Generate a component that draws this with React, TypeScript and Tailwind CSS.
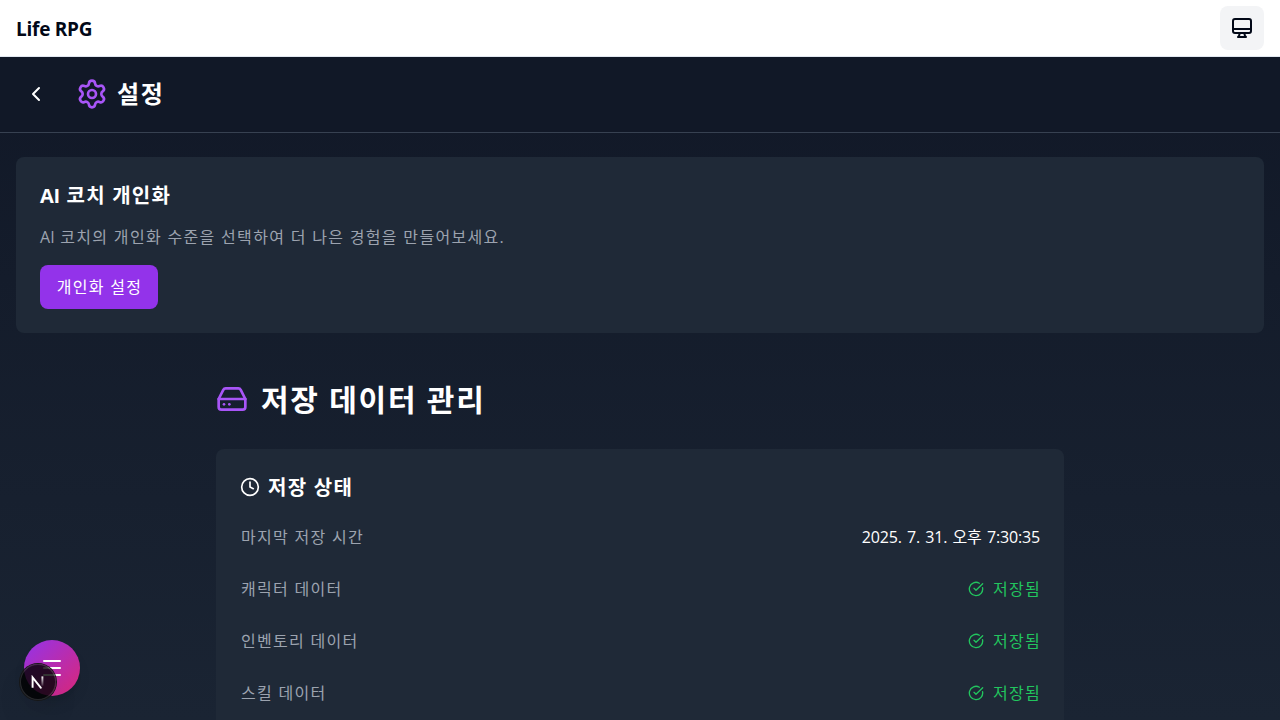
import { Settings, ChevronLeft, HardDrive, Clock, CircleCheckBig, Menu } from 'lucide-react';

const rows = ['캐릭터 데이터', '인벤토리 데이터', '스킬 데이터'];

function DesktopIcon() {
  return (
    <svg width="24" height="24" viewBox="0 0 24 24" fill="none" stroke="currentColor" strokeWidth="2" strokeLinecap="round" strokeLinejoin="round">
      <path d="M9.75 17L9 20l-1 1h8l-1-1-.75-3M3 13h18M5 17h14a2 2 0 002-2V5a2 2 0 00-2-2H5a2 2 0 00-2 2v10a2 2 0 002 2z" />
    </svg>
  );
}

export default function App() {
  return (
    <div className="relative flex h-[720px] flex-col overflow-hidden bg-[#111827] font-['Open_Sans','Noto_Sans_CJK_KR',sans-serif] text-white">
      <header className="flex h-[57px] shrink-0 items-center justify-between border-b border-[#e2e8f0] bg-white px-4 text-[#020817]">
        <span className="pt-0.5 text-[19px] leading-7 font-bold tracking-[-0.25px]">Life RPG</span>
        <button className="flex size-11 items-center justify-center rounded-lg bg-[#f3f4f6]"><DesktopIcon /></button>
      </header>
      <div className="flex h-[663px] shrink-0 flex-col bg-linear-to-b/srgb from-[#111827] to-[#1a2433]">
        <div className="flex h-[76px] shrink-0 items-center border-b border-[#374151] bg-[#111827] px-4 pb-0.5">
          <div className="flex size-10 items-center justify-center"><ChevronLeft size={24} /></div>
          <Settings size={32} className="ml-5 text-[#a855f7]" />
          <h1 className="ml-[9px] pt-px text-2xl font-bold tracking-[1.7px]">설정</h1>
        </div>
        <section className="mx-4 mt-6 h-44 shrink-0 rounded-lg bg-[#1f2937] p-6">
          <h2 className="pt-px text-xl leading-7 font-bold tracking-[1.25px]"><span className="tracking-[-0.2px]">AI</span> 코치 개인화</h2>
          <p className="mt-[15px] tracking-[1.32px] text-[#9ca3af]"><span className="tracking-[0.1px]">AI</span> 코치의 개인화 수준을 선택하여 더 나은 경험을 만들어보세요.</p>
          <button className="mt-4 h-11 w-[118px] rounded-lg bg-[#9333ea] pl-px tracking-[1.32px]">개인화 설정</button>
        </section>
        <main className="mx-auto mt-12 w-[848px] shrink-0">
          <div className="flex h-9 items-center gap-3">
            <HardDrive size={32} className="text-[#a855f7]" />
            <h2 className="pt-0.5 pl-px text-3xl font-bold tracking-[1.75px]">저장 데이터 관리</h2>
          </div>
          <div className="mt-8 h-72 rounded-lg bg-[#1f2937] p-6">
            <h3 className="mb-4 flex h-7 items-center gap-2 text-xl font-bold tracking-[1.25px]"><Clock size={20} /><span className="pt-px">저장 상태</span></h3>
            <div className="flex h-10 items-center justify-between">
              <span className="pl-px tracking-[1.3px] text-[#9ca3af]">마지막 저장 시간</span>
              <span className="tracking-[-0.15px] [word-spacing:1.2px]">2025. 7. 31. 오후 7:30:35</span>
            </div>
            {rows.map((r) => (
              <div key={r} className="mt-3 flex h-10 items-center justify-between tracking-[1.3px] text-[#9ca3af]">
                <span className="pl-px">{r}</span>
                <span className="flex items-center gap-2 text-[#22c55e]"><CircleCheckBig size={16} /><span className="-mr-px pl-px">저장됨</span></span>
              </div>
            ))}
          </div>
        </main>
      </div>
      <button className="absolute bottom-6 left-6 flex size-14 items-center justify-center rounded-full bg-linear-to-br/srgb from-[#9333ea] to-[#db2777] shadow-lg"><Menu size={24} /></button>
      <div className="absolute bottom-5 left-5 flex size-9 items-center justify-center rounded-full bg-black/80 shadow-[0_0_0_1px_#171717,inset_0_0_0_1px_rgba(255,255,255,0.14),0_16px_32px_-8px_rgba(0,0,0,0.24)]">
        <svg width="14" height="14" viewBox="0 0 14 14" fill="none" strokeWidth="1.9">
          <defs>
            <linearGradient id="diag" x1="7" y1="6" x2="12" y2="13" gradientUnits="userSpaceOnUse"><stop stopColor="white" /><stop offset="0.8" stopColor="white" /><stop offset="1" stopColor="white" stopOpacity="0.4" /></linearGradient>
            <linearGradient id="stem" x1="11" y1="1" x2="11" y2="11" gradientUnits="userSpaceOnUse"><stop stopColor="white" /><stop offset="1" stopColor="white" stopOpacity="0.1" /></linearGradient>
          </defs>
          <path d="M1.6 12.7V2.4L10.5 13.6" stroke="url(#diag)" />
          <path d="M11.4 1.4v9.4" stroke="url(#stem)" />
        </svg>
      </div>
    </div>
  );
}
